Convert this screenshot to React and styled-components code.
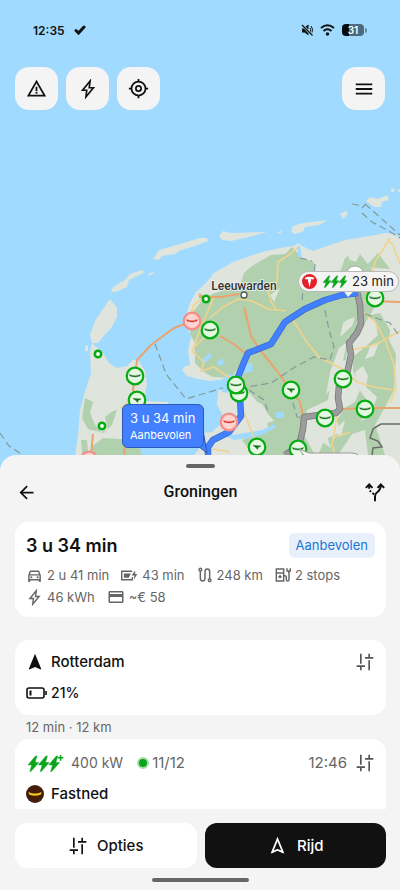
import styled, { createGlobalStyle } from 'styled-components';
import { MdArrowBack, MdCreditCard, MdMenu, MdNavigation, MdOutlineDirectionsCar, MdOutlineNavigation, MdWarningAmber } from 'react-icons/md';

const GlobalStyle = createGlobalStyle`
  *,*:before,*:after{box-sizing:border-box}
  body{margin:0;background:#f4f4f4;color:#111;font-family:Inter,"Liberation Sans",sans-serif}
  button{font:inherit;color:inherit;border:none;padding:0;cursor:pointer}
  h1,h2,p,ul{margin:0;padding:0}
  svg{display:block;flex:none}
`;

const Screen = styled.div`
  display:flex; flex-direction:column; min-height:100vh;
`;

const MapArea = styled.section`
  position:relative; flex:1; min-height:320px; margin-bottom:-16px; overflow:hidden; background:#a0dbff;
`;

const MapSvg = styled.svg`
  position:absolute; inset:0; width:100%; height:100%;
`;

const StatusBar = styled.div`
  position:relative; display:flex; align-items:center; justify-content:space-between; height:60px; padding:0 33px; font-size:12px; font-weight:600;
`;

const StatusGroup = styled.div`
  display:flex; align-items:center; gap:${p => p.$gap}px;
`;

const Battery = styled.span`
  display:flex; align-items:center; justify-content:center; width:22px; height:12px; border-radius:4px; background:linear-gradient(90deg,#050a0d 32%,#4b6a7d 32%); color:#fff; font-size:10px; line-height:12px;
`;

const BatteryGroup = styled.span`
  display:flex; align-items:center; gap:1px;
  &:after{content:'';width:2px;height:5px;border-radius:0 2px 2px 0;background:#64879b}
`;

const MapTools = styled.nav`
  position:relative; display:flex; gap:8px; padding:7px 15px;
`;

const MapButton = styled.button`
  display:flex; align-items:center; justify-content:center; width:43px; height:43px; border-radius:14px; background:#f4f4f4;
  &:last-child{margin-left:auto}
`;

const Sheet = styled.main`
  position:relative; display:flex; flex-direction:column; padding:9px 14px 8px 15px; border-radius:16px 16px 0 0; background:#f4f4f4;
`;

const Bar = styled.span`
  align-self:center; width:${p => p.$width}px; height:4px; border-radius:2px; background:#666;
`;

const SheetHeader = styled.header`
  display:flex; align-items:center; justify-content:space-between; height:48px; padding:0 1px;
`;

const IconButton = styled.button`
  display:flex; align-items:center; justify-content:center; width:20px; height:24px; background:none; color:${p => p.$muted ? '#555' : '#111'};
`;

const SheetTitle = styled.h1`
  font-family:Roboto,Inter,sans-serif; font-size:16px; font-weight:500; line-height:24px;
`;

const Card = styled.section`
  display:flex; flex-direction:column; gap:${p => p.$gap}px; padding:11px; border-radius:14px; background:#fff;
`;

const Summary = styled(Card)`
  margin:6px 0 23px;
`;

const StartCard = styled(Card)`
  padding-top:10px; padding-bottom:13px;
`;

const ClippedCard = styled(Card)`
  padding-top:12px; padding-bottom:6px; border-radius:14px 14px 0 0;
`;

const Row = styled.div`
  display:flex; align-items:center; justify-content:space-between; min-height:${p => p.$height || 24}px;
`;

const Duration = styled.h2`
  font-size:18px; font-weight:600; line-height:24px;
`;

const Badge = styled.span`
  padding:0 7px; border-radius:6px; background:#e8f0fc; color:#1878d4; font-size:13px; line-height:25px;
`;

const Facts = styled.ul`
  display:flex; flex-wrap:wrap; gap:4px 12px; list-style:none;
`;

const Fact = styled.li`
  display:flex; align-items:center; gap:4px; color:#666; font-size:13px; line-height:18px;
`;

const Label = styled.span`
  display:flex; align-items:center; gap:${p => p.$gap || 7}px; font-size:${p => p.$size || 15}px; font-weight:500; line-height:18px;
`;

const Muted = styled.span`
  color:#666; font-size:${p => p.$size || 15}px; font-weight:400; line-height:18px;
`;

const Leg = styled.p`
  padding:3px 11px; color:#666; font-size:13px; line-height:18px;
`;

const IconCell = styled.span`
  display:flex; justify-content:${p => p.$start ? 'flex-start' : 'center'}; width:${p => p.$start ? 21 : 18}px;
`;

const Available = styled.span`
  display:flex; align-items:center; gap:3px; margin-left:7px; color:#666; font-size:15px; font-weight:400;
  &:before{content:'';width:12px;height:12px;border-radius:50%;border:2px solid #a5dfaa;background:#0aa51b}
`;

const Footer = styled.footer`
  display:flex; gap:8px; padding:14px 0 10px;
`;

const Action = styled.button`
  display:flex; flex:1; align-items:center; justify-content:center; gap:9px; height:45px; border-radius:12px; font-size:15px; font-weight:500;
  background:${p => p.$primary ? '#111' : '#fff'}; color:${p => p.$primary ? '#fff' : '#111'};
`;

const Callout = styled.div`
  position:absolute; left:30.5%; bottom:23px; width:82px; height:44px; padding:4px 0 0 7px; border:1px solid #2b59b8; border-radius:6px; background:#4280ff; color:#fff;
  font-size:13px; line-height:19px;
  small{display:block;font-size:11px;line-height:15px}
`;

const StopCallout = styled.div`
  position:absolute; left:74.5%; bottom:179px; display:flex; align-items:center; gap:4px; height:21px; padding:0 4px 0 3px; border:1px solid #b9b9b9; border-radius:11px; background:#f4f4f4;
  font-size:13px; line-height:19px; color:#222; white-space:nowrap;
`;

function Line({ size = 18, width = 2, children }) {
  return (
    <svg width={size} height={size} viewBox="0 0 24 24" fill="none" stroke="currentColor" strokeWidth={width} aria-hidden="true">
      {children}
    </svg>
  );
}

const BoltIcon = ({ size }) => <Line size={size}><path d="M14.500 2.500 5.500 13.500h5L9.500 21.500 18.500 10.500h-5z" /></Line>;
const TargetIcon = () => <Line size={21} width={2}><circle cx="12" cy="12" r="8" /><circle cx="12" cy="12" r="3" /><path d="M12 1v3M12 20v3M1 12h3M20 12h3" /></Line>;
const TuneIcon = ({ size = 20 }) => <Line size={size}><path d="M7 2v12M2 17h10M7 17v5M17 22V10M12 7h10M17 7V2" /></Line>;
const ForkIcon = () => <Line size={20} width={2.4}><path d="M12 23v-6q0-3 3-5 4-3 4-9M15 7l4-4 4 4M1 7l4-4 4 4M5 4v4M6 10l1 2M9 13l2 2" /></Line>;
const RoadIcon = () => <Line size={16} width={2.2}><circle cx="5" cy="4" r="2" /><circle cx="19" cy="20" r="2" /><path d="M5 6v11q0 4 3.500 4t3.500-4V7q0-4 3.500-4T19 7v11" /></Line>;
const PumpIcon = () => <Line size={16} width={2.2}><path d="M2 21V3h11v18zM2 9h11M7.500 12v5M5 14.500h5M13 13h2q2 0 2 2v4q0 2 2 2t2-2V7M18 2v4h5V2M20.500 6v3" /></Line>;

function Bolts({ plus }) {
  const units = plus ? 40 : 36;
  return (
    <svg width={plus ? 38 : 27} height={plus ? 17 : 13} viewBox={`0 0 ${units} 18`} fill="#0aa51b" aria-hidden="true">
      {[2, 13, 24].map(x => <path key={x} d={`M${x + 8} 1 ${x} 10.500h4l-2 7h1l8.500-9.500h-4l2-7z`} stroke="#0aa51b" strokeWidth=".5" strokeLinejoin="round" />)}
      {plus && <path d="M36.500 0v6M33.500 3h6" stroke="#0aa51b" strokeWidth="1.600" />}
    </svg>
  );
}

const PINS = [
  { x: 239, y: 393 }, { x: 236, y: 385 }, { x: 135, y: 376 }, { x: 137, y: 400, leaf: true },
  { x: 210, y: 330 }, { x: 291, y: 390, leaf: true }, { x: 343, y: 379 }, { x: 325, y: 418 },
  { x: 365, y: 409 }, { x: 257, y: 447, leaf: true }, { x: 298, y: 449 }, { x: 375, y: 298 },
  { x: 192, y: 321, busy: true }, { x: 229, y: 422, busy: true }, { x: 89, y: 460, busy: true },
];

function Pin({ x, y, leaf, busy }) {
  const ink = busy ? '#d5332c' : '#176d20';
  return (
    <g transform={`translate(${x} ${y})`}>
      <circle r="8.300" fill={busy ? '#ffd3cf' : '#e4f8e2'} stroke={busy ? '#f58d88' : '#05ad13'} strokeWidth="2.200" />
      {leaf
        ? <path d="M-4-1.500 4-1 1 .5.500 2.500-1 .500z" fill={ink} stroke={ink} strokeWidth=".5" />
        : <path d="M-5.500-1.500Q0 1.200 5.500-1.500L5 0Q0 2.200-5 0z" fill={ink} stroke={ink} strokeWidth=".3" />}
    </g>
  );
}

const RECOMMENDED = 'M208 471V447L213 440 229 432 241 416 240 398 236 382 244 362 248 353 271 344 278 333 285 322 305 309 325 300 342 295 358 293';
const ALTERNATIVE = 'M357 292 360 305 361 324 357 333 349 343 351 355 347 374 339 386 338 398 340 409 336 413 304 417 303 429 299 446 285 455';

function RouteMap() {
  return (
    <MapSvg viewBox="0 0 400 471" preserveAspectRatio="xMidYMax slice" role="img" aria-label="Routekaart">
      <g fill="#dfe4dd">
        <path d="M187 312 190 303 196 292 206 283 214 273 233 262 262 252 280 248 294 246 298 243 302 246 313 251 330 245 345 240 370 236 385 233 393 234 400 237V471H191L195 454 205 441 197 439 196 434 212 432 221 424 222 414 217 404 218 392 226 382 220 380 210 381 198 379 187 376 182 370 185 366 190 365 188 350 191 337 187 326z" />
        <path d="M92 343 103 353 109 363 117 368 127 366 133 360 138 360 145 371 147 385 143 401 168 402 166 410 150 415 139 440 142 471H73L78 435 80 410 85 392 91 373 90 352z" />
        <path d="M92 343 90 335 95 321 101 312 110 299 117 308 117 317 111 328 102 338 98 343z" />
        <path d="M111 292 113 287 125 280 130 274 142 270 145 272 129 280 127 287 116 292z" />
        <path d="M153 259 159 250 180 244 200 238 207 238 208 241 195 246 181 250 175 254 162 256 159 260z" />
        <path d="M219 236 223 231 231 233 267 232 245 238 231 241 222 240z" />
        <path d="M291 231 293 226 303 223 328 220 319 225 305 227 303 232 294 234z" />
        <path d="M340 214 346 211 348 214 343 219zM366 201 370 197 378 199 387 195 389 200 382 202 381 207 374 207zM391 189 395 188 394 192 391 192zM277 233 282 230 281 233zM148 274 153 272 154 273 149 276zM85 346 88 345 88 351 85 351zM397 190l3-1v4z" />
      </g>
      <g fill="#b1d0ae">
        <path d="M192 313 203 299 215 293 240 286 244 273 252 266 271 255 285 254 292 247 302 258 314 262 314 273 340 272 345 258 356 262 360 254 373 271 380 292 373 310 364 325 357 336 348 337 346 360 337 362 332 376 328 400 307 410 303 433 315 455 253 455 242 440 268 429 266 412 243 385 236 370 232 378 213 377 205 373 195 363 195 343 190 334z" />
        <path d="M365 316 375 320 378 335 365 347 353 357 353 370 360 390 355 402 345 408 337 420 340 433 325 439 318 455H338L352 434 365 430 368 455H385L375 425 385 407 394 390 396 354 389 340 390 330 380 313zM345 260 348 255 352 268 345 271zM365 267 378 253 390 269z" />
        <path d="M85 398 93 402 90 413 95 425 101 432 108 430 105 417 113 411 117 410 112 425 104 433 88 429 82 418zM81 440 87 440 88 452 82 454zM91 455 91 447 103 438 137 440 142 455z" />
      </g>
      <g fill="#dfe4dd">
        <path d="M347 320 355 317 352 326 340 337 343 323zM339 348 347 342 342 365 334 384 326 395 330 372zM355 372 363 366 368 376 366 387 377 397 370 417 361 421 368 402 357 386zM371 345 379 342 374 356 365 359zM336 405 343 397 339 410zM252 400 262 404 268 414 274 421 263 424 250 416z" />
        <path d="M270 295 280 288 274 302zM333 431 345 420 341 437zM316 438 326 434 331 448z" />
      </g>
      <g fill="#a0dbff">
        <path d="M200 361 210 353 212 356 205 363zM217 363 222 358 225 363 219 366zM243 365 252 363 253 371 242 374zM225 436 245 433 262 430 275 424 276 427 264 434 250 438 234 440zM275 413 284 411 283 418 276 418zM220 381 230 373 236 380 230 393 222 392zM297 246h3l2 13-4-3z" />
      </g>
      <g fill="none" stroke="#f0d38d" strokeWidth="1.600">
        <path d="M298 247 290 254 278 262 277 282 268 291 271 302 276 309M210 318 223 307 238 299 252 301 268 309 286 311M192 313 193 306 201 299M192 349 205 337 210 330M214 297 202 325 196 340 193 352 204 362 201 371 214 367 230 378M293 320 306 341 319 357 344 370 357 382 374 387 395 390M365 302 368 288 375 262 390 238M400 264 393 245 387 239M363 312 375 322 385 340 394 365 396 388 390 403M351 350 375 345 400 331M337 416 332 445 335 455M237 398 247 420 258 447M213 449 230 452M121 408 136 395M332 438 350 432" />
      </g>
      <g fill="none" stroke="#e9a36f" strokeWidth="2">
        <path d="M190 322 174 328 151 345 137 360 135 376 133 390 140 407M199 297 220 297 239 294M245 310 251 336 260 350 277 371 291 390 300 402 304 420M220 336 235 345 245 353M342 409 365 408 400 408M93 434 91 455M247 320 244 307M199 294 204 298M373 301 400 302M125 441 124 455" />
      </g>
      <g fill="none" stroke="#829a99" strokeWidth="1.200" strokeDasharray="7 4">
        <path d="M155 344 166 374 186 399 223 388M300 258 312 261M315 264 314 275 303 290 302 302M325 310 329 330 334 347 330 360 314 357 295 367 271 383 247 387M290 392 297 417 307 418M249 390 264 400 269 414M352 204 358 205 362 208 366 204M362 213 372 222 389 231 400 238M365 204 383 220 400 235M365 314 390 323 400 337M0 433 9 446 23 455" />
      </g>
      <path d="M400 424H381l-5 3-3 2-3 9 8 3 4 6-9 1-1 8" fill="none" stroke="#6b6b6b" strokeWidth="1.500" />
      <g fill="none" strokeLinejoin="round">
        <path d={ALTERNATIVE} stroke="#777" strokeWidth="6.500" />
        <path d={ALTERNATIVE} stroke="#9c9c9c" strokeWidth="5" />
        <path d={RECOMMENDED} stroke="#3a6cd0" strokeWidth="6.500" />
        <path d={RECOMMENDED} stroke="#4280ff" strokeWidth="5" />
      </g>
      <circle cx="355" cy="275" r="9" fill="#fff" stroke="#aaa" />
      {PINS.map(pin => <Pin key={`${pin.x}-${pin.y}`} {...pin} />)}
      <path d="M299 449 309 453H352q6 0 8 4H305z" fill="#f4f4f4" stroke="#999" />
      {[[98, 354], [102, 426], [206, 299]].map(([x, y]) => <circle key={x} cx={x} cy={y} r="3.200" fill="#fff" stroke="#05ad13" strokeWidth="2.600" />)}
      <circle cx="244" cy="295" r="3" fill="#fff" stroke="#555" strokeWidth="1.300" />
      <text x="244" y="290" textAnchor="middle" fontFamily="Roboto" fontSize="12" fontWeight="500" fill="#333" stroke="#eef2ec" strokeWidth="1.500" paintOrder="stroke">Leeuwarden</text>
      <path d="M343 290h12l-7 7z" fill="#f4f4f4" />
      <path d="M190 440 207 453 203 430z" fill="#4280ff" stroke="#2b59b8" />
    </MapSvg>
  );
}

const FACTS = [
  { icon: <MdOutlineDirectionsCar size={17} />, text: '2 u 41 min' },
  { icon: <Line size={17}><path d="M16 6H1v12h15v-4" /><path d="M4 9h10l-3 6H4zM20 5l-5 7h4l-1 6 5-8h-3z" fill="currentColor" stroke="none" /></Line>, text: '43 min' },
  { icon: <RoadIcon />, text: '248 km' },
  { icon: <PumpIcon />, text: '2 stops' },
  { icon: <BoltIcon size={17} />, text: '46 kWh' },
  { icon: <MdCreditCard size={18} />, text: '~€ 58' },
];

export default function App() {
  return (
    <Screen>
      <GlobalStyle />
      <MapArea>
        <RouteMap />
        <StatusBar>
          <StatusGroup $gap={9}>
            <span>12:35</span>
            <Line size={12} width={6}><path d="m4 13 5 5L20 6" strokeLinecap="round" /></Line>
          </StatusGroup>
          <StatusGroup $gap={7}>
            <svg width="12" height="12" viewBox="0 0 24 24" fill="currentColor" aria-hidden="true">
              <path d="M2 9h4l9 10v4l-8-6H2zM9 5l6-4v10z" />
              <path d="M2 2l21 21" stroke="currentColor" strokeWidth="2.500" />
              <path d="M18 8q2 3 1 7M20 4q5 6 2 13" fill="none" stroke="currentColor" strokeWidth="2" />
            </svg>
            <svg width="15" height="12" viewBox="0 0 30 24" fill="none" stroke="currentColor" strokeWidth="4" aria-hidden="true">
              <path d="M2 8q13-11 26 0M7 14q8-7 16 0" />
              <circle cx="15" cy="20" r="1.500" fill="currentColor" />
            </svg>
            <BatteryGroup><Battery>31</Battery></BatteryGroup>
          </StatusGroup>
        </StatusBar>
        <MapTools>
          <MapButton aria-label="Meldingen"><MdWarningAmber size={21} /></MapButton>
          <MapButton aria-label="Laadpunten"><BoltIcon size={20} /></MapButton>
          <MapButton aria-label="Mijn locatie"><TargetIcon /></MapButton>
          <MapButton aria-label="Menu"><MdMenu size={22} /></MapButton>
        </MapTools>
        <Callout>3 u 34 min<small>Aanbevolen</small></Callout>
        <StopCallout>
          <svg width="15" height="15" viewBox="0 0 16 16" aria-hidden="true">
            <circle cx="8" cy="8" r="8" fill="#e4212b" />
            <path d="M3 4q5-2 10 0l-1 2-2-1-2 9-2-9-2 1z" fill="#fff" />
          </svg>
          <Bolts />
          23 min
        </StopCallout>
      </MapArea>

      <Sheet>
        <Bar $width={29} />
        <SheetHeader>
          <IconButton aria-label="Terug"><MdArrowBack size={21} /></IconButton>
          <SheetTitle>Groningen</SheetTitle>
          <IconButton aria-label="Alternatieve routes"><ForkIcon /></IconButton>
        </SheetHeader>

        <Summary $gap={8}>
          <Row $height={25}>
            <Duration>3 u 34 min</Duration>
            <Badge>Aanbevolen</Badge>
          </Row>
          <Facts>
            {FACTS.map(fact => <Fact key={fact.text}>{fact.icon}{fact.text}</Fact>)}
          </Facts>
        </Summary>

        <StartCard $gap={10}>
          <Row>
            <Label><IconCell><MdNavigation size={20} /></IconCell>Rotterdam</Label>
            <IconButton $muted aria-label="Vertrek aanpassen"><TuneIcon /></IconButton>
          </Row>
          <Label $gap={4} $size={14}>
            <IconCell $start>
              <svg width="21" height="12" viewBox="0 0 21 12" fill="none" stroke="currentColor" strokeWidth="1.600" aria-hidden="true">
                <rect x="1" y="1" width="17" height="10" rx="2" />
                <path d="M20 4v4" />
                <path d="M4.500 3.500v5" strokeWidth="2" />
              </svg>
            </IconCell>
            21%
          </Label>
        </StartCard>
        <Leg>12 min · 12 km</Leg>
        <ClippedCard $gap={10}>
          <Row>
            <Label><Bolts plus /><Muted $size={14}>400 kW</Muted><Available>11/12</Available></Label>
            <Label $gap={8}>
              <Muted>12:46</Muted>
              <IconButton $muted aria-label="Laadstop aanpassen"><TuneIcon /></IconButton>
            </Label>
          </Row>
          <Label>
            <svg width="18" height="18" viewBox="0 0 18 18" aria-hidden="true">
              <circle cx="9" cy="9" r="9" fill="#431c0b" />
              <path d="M2.500 7q6.500 3 13 0l-.5 2.500q-6 2.500-12 0z" fill="#f6c51b" />
            </svg>
            Fastned
          </Label>
        </ClippedCard>

        <Footer>
          <Action><TuneIcon />Opties</Action>
          <Action $primary><MdOutlineNavigation size={21} />Rijd</Action>
        </Footer>
        <Bar $width={97} />
      </Sheet>
    </Screen>
  );
}
